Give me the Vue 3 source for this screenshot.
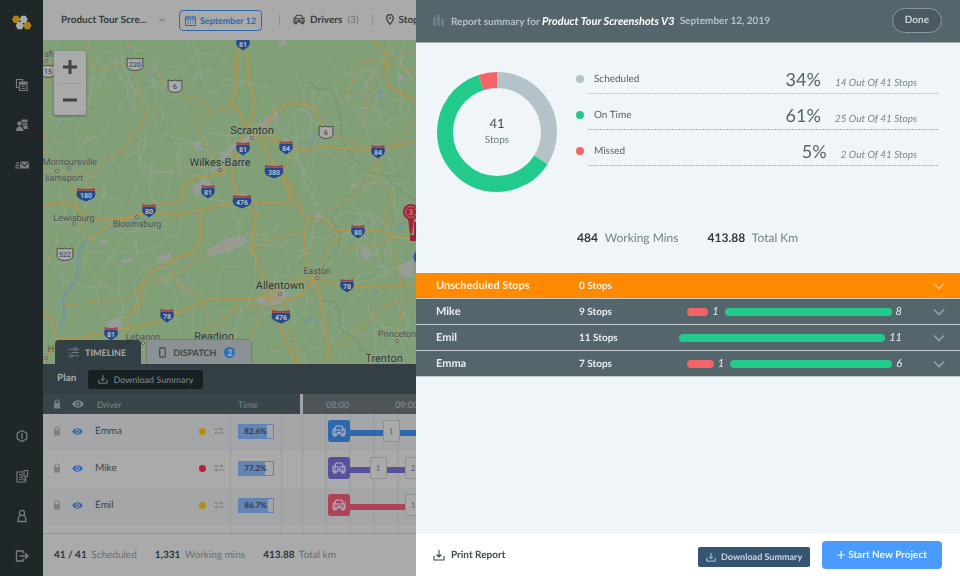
<script setup>
const navTop = ['copy', 'drivers', 'mail']
const navBottom = ['alert', 'depot', 'user', 'exit']

const roads = [
  'M86 40L85 55L95 66L105 69L128 64', 'M127 40L130 55L133 62',
  'M137 70L135 78L139 90L138 98L145 114L142 125L131 134L128 145L118 155L103 160L97 168L90 176L87 182L90 192',
  'M147 67L158 73L164 85L175 88L185 98L198 98L208 107L210 114L228 107L236 106',
  'M210 114L199 128L204 140L212 158L218 168', 'M43 133L48 142L47 150L43 155',
  'M43 170L60 172L80 172L90 176', 'M43 60L53 62L58 70', 'M43 92L48 84L48 78', 'M70 175L71 182L74 195L78 210L80 224L88 240',
  'M43 258L57 255L78 252', 'M330 210L355 195L366 180L378 158', 'M333 136L345 138L358 145L372 150',
  'M236 106L232 100L236 85L234 60L240 50', 'M258 138L270 130L290 150L285 175L300 200',
  'M388 62L370 60L358 65L354 75L350 90L342 100', 'M386 62L375 78L367 95L366 112L362 125',
  'M386 62L400 55L416 50', 'M388 63L405 70L420 72', 'M420 112L405 135L395 146',
  'M378 158L378 182L392 195L384 215L390 236L392 250L400 275L402 300L398 340',
  'M63 305L90 303L130 297L139 289L158 280L180 272L195 262L215 250L240 242',
  'M172 262L177 285L195 292L207 310L208 325L200 340', 'M240 305L225 318L210 338L200 350',
  'M250 249L270 240L304 231', 'M336 232L328 250L316 277', 'M338 235L340 247L352 250L362 242L375 246L390 238',
  'M268 297L285 300L300 296L316 280', 'M220 320L240 308L265 305', 'M263 305L258 320L250 345L250 364',
  'M329 350L350 338L365 325L380 308L400 302L420 297', 'M285 300L283 318L295 340L299 364', 'M128 328L140 345L180 348',
]
const highways = [
  'M243 45L247 52L249 85L254 95L253 115L247 128L236 150L220 172L210 176L195 178L181 188L183 198L175 202L157 205',
  'M243 45L237 52L236 85L232 105L240 113L246 126L260 138L270 158L280 172L290 185L293 203',
  'M220 175L235 160L250 140L260 130L270 122L273 112L285 104L302 103L314 107L322 125L326 132',
  'M263 138L272 139L285 146L303 151L325 146L350 149L378 150L395 146L420 140',
  'M373 40L386 52L388 85L394 90L420 103',
  'M43 206L60 202L75 206L90 218L110 219L135 217L150 212L175 215L200 210L215 206L240 202L300 204L302 215L310 218L328 220L336 230L362 231L380 230L390 236L420 236',
  'M232 160L232 175L235 190L245 202L256 215L252 245L262 275L266 296L285 300L300 296L316 277',
  'M200 210L201 240L193 252L170 260L152 272L140 288L143 300L137 307L127 318L128 328',
  'M60 338L80 338L105 333L128 328L150 324L165 318L180 312L200 303L215 298L255 298L270 295L295 280L316 277L330 283L350 287L372 286L420 285',
  'M43 312L52 320L54 332L60 340L50 352L43 362', 'M308 220L304 240L309 270L316 277',
  'M266 296L276 312L285 340L297 364', 'M316 278L322 310L327 340L329 350L325 364', 'M283 180L293 203',
  'M88 240L105 228L130 217L150 212',
]

// Small local roads: deterministic wandering lines below the main network.
let seed = 7
const rnd = () => {
  seed = (seed * 16807) % 2147483647
  return seed / 2147483647
}
const lanes = Array.from({ length: 130 }, () => {
  let x = 43 + rnd() * 375
  let y = 40 + rnd() * 324
  let a = rnd() * 6.28
  let d = `M${Math.round(x)} ${Math.round(y)}`
  for (let i = 0; i < 9; i++) {
    a += (rnd() - 0.5) * 1.3
    x += Math.cos(a) * 7
    y += Math.sin(a) * 7
    d += `L${Math.round(x)} ${Math.round(y)}`
  }
  return d
})

const towns = [
  'M250 132L262 122L277 108L278 116L262 134L250 142L232 150L222 166L200 176L212 182L196 198L192 188L206 176L228 148Z',
  'M207 250L228 238L244 236L244 244L222 253L208 256Z', 'M220 245L244 236L250 241L226 253Z', 'M106 325L116 317L123 324L118 331L106 332Z',
  'M396 268L413 258L414 276L402 277Z', 'M194 144L200 143L202 150L196 152Z', 'M279 40L286 40L286 46L279 46Z',
  'M398 73L406 77L399 83Z', 'M360 249L368 246L372 256L364 260Z', 'M316 212L324 216L318 222L314 218Z',
  'M255 300L275 290L290 292L282 304L262 306Z', 'M160 256L172 252L168 262L156 260Z', 'M120 260L134 257L132 262L122 263Z', 'M100 241L109 239L106 244L102 244Z',
]
const water = [
  'M130 48L131 60', 'M148 68L155 77', 'M310 145L314 138L318 134', 'M380 90L380 100', 'M88 238L79 250L78 275L62 300L65 315L60 328',
  'M105 229L120 227L135 220', 'M157 206L175 202', 'M315 324L322 318', 'M398 232L403 222', 'M372 289L378 293', 'M60 125L64 120', 'M397 51L400 55', 'M304 322L312 318',
]
const interstates = [
  [243, 43, '81'], [86, 194, '180'], [208, 191, '81'], [243, 148, '81'], [286, 147, '84'], [378, 151, '84'],
  [274, 171, '380'], [242, 201, '476'], [149, 210, '80'], [358, 231, '80'], [347, 285, '78'], [167, 315, '78'],
  [111, 333, '81'], [281, 316, '476'],
].map(([x, y, n]) => ({ x, y, n, w: n.length > 2 ? 9 : 6.5 }))
const routes = [[135, 64, '220'], [175, 86, '6'], [326, 132, '6'], [65, 254, '522'], [48, 71, '15']]
  .map(([x, y, n]) => ({ x, y, n, w: n.length > 2 ? 8 : 7 }))
const places = [
  { x: 252, y: 134, n: 'Scranton', s: 'city', dx: 252, dy: 138 },
  { x: 220, y: 166, n: 'Wilkes-Barre', s: 'city', dx: 220, dy: 170 },
  { x: 280, y: 289, n: 'Allentown', s: 'city', dx: 280, dy: 294 },
  { x: 214, y: 340, n: 'Reading', s: 'city', dx: 214, dy: 344 },
  { x: 384, y: 362, n: 'Trenton', s: 'city', dx: 384, dy: 368 },
  { x: 70, y: 165, n: 'Montoursville', s: 'town', dx: 69, dy: 168 },
  { x: 64, y: 181, n: 'liamsport', s: 'town', dx: 57, dy: 171 },
  { x: 74, y: 221, n: 'Lewisburg', s: 'town', dx: 74, dy: 224 },
  { x: 137, y: 227, n: 'Bloomsburg', s: 'town', dx: 137, dy: 217 },
  { x: 317, y: 274, n: 'Easton', s: 'town', dx: 317, dy: 278 },
  { x: 143, y: 340, n: 'Lebanon', s: 'town', dx: 143, dy: 343 },
  { x: 397, y: 337, n: 'Princeton', s: 'town', dx: 397, dy: 341 },
  { x: 49, y: 57, n: 'sfi', s: 'town', dx: 46, dy: 61 },
  { x: 51, y: 352, n: 'H', s: 'town', dx: 46, dy: 358 },
]

const drivers = [
  { name: 'Emma', dot: 'amber', time: 82.6, tone: 'blue', legs: [{ w: 33, n: 1 }, { w: 60, n: 2 }] },
  { name: 'Mike', dot: 'red', time: 77.2, tone: 'violet', legs: [{ w: 20, n: 1 }, { w: 18, n: 2 }] },
  { name: 'Emil', dot: 'amber', time: 86.7, tone: 'rose', legs: [{ w: 55, n: 1 }, { w: 60, n: 2 }] },
]

const shares = [
  { label: 'Scheduled', pct: 34, stops: 14, tone: 'grey', from: 0 },
  { label: 'On Time', pct: 61, stops: 25, tone: 'green', from: 34 },
  { label: 'Missed', pct: 5, stops: 2, tone: 'red', from: 95 },
]

const rows = [
  { name: 'Unscheduled Stops', stops: 0, missed: 0, done: 0, open: true },
  { name: 'Mike', stops: 9, missed: 1, mw: 21, done: 8, dw: 167 },
  { name: 'Emil', stops: 11, missed: 0, done: 11, dw: 206 },
  { name: 'Emma', stops: 7, missed: 1, mw: 27, done: 6, dw: 162 },
]
</script>

<template>
  <div class="app">
    <svg class="defs" aria-hidden="true">
      <symbol id="download" viewBox="0 0 12 12"><path d="M1 7v4h10V7M6 1v7M3.5 5.5L6 8l2.5-2.5" fill="none" stroke="currentColor" stroke-width="1.1" /></symbol>
      <symbol id="chevron" viewBox="0 0 12 8"><path d="M1 1.5l5 5 5-5" fill="none" stroke="currentColor" stroke-width="1.700" /></symbol>
      <symbol id="car" viewBox="0 0 14 12"><path d="M2.6 5L3.8 1.8Q4.1 1 5 1h4q.9 0 1.2.8L11.400 5M2.500 5h9Q13 5 13 6.500V9H1V6.500Q1 5 2.500 5ZM2 9v2h2V9M10 9v2h2V9M0.300 4h1.500M12.200 4h1.500M5 7.300h4" fill="none" stroke="currentColor" stroke-width="1.200" /><circle cx="3.200" cy="7" r=".8" fill="currentColor" /><circle cx="10.800" cy="7" r=".8" fill="currentColor" /></symbol>
      <symbol id="lock" viewBox="0 0 8 10"><path d="M2 4.500V3a2 2 0 0 1 4 0v1.500" fill="none" stroke="currentColor" stroke-width="1.200" /><rect x="1" y="4" width="6" height="5.500" rx=".6" fill="currentColor" /></symbol>
      <symbol id="eye" viewBox="0 0 12 8"><path fill-rule="evenodd" d="M0 4Q2.500.2 6 .2T12 4Q9.500 7.800 6 7.800T0 4ZM6 1.500a2.500 2.500 0 1 0 0 5 2.500 2.500 0 0 0 0-5Z" fill="currentColor" /><circle cx="6" cy="4" r="1.400" fill="currentColor" /></symbol>
      <symbol id="swap" viewBox="0 0 10 8"><path d="M0 2h9M7 .3L9 2 7 3.700M10 6H1M3 4.300L1 6l2 1.700" fill="none" stroke="currentColor" stroke-width=".9" /></symbol>
      <symbol id="copy" viewBox="0 0 14 14"><path d="M4 9.500H1.500v-8h6V3M4.500 4H12v8.500H4.500ZM6.500 6.500H10M6.500 8.500H10M6.500 10.500H10" fill="none" stroke="currentColor" stroke-width="1.200" /><path d="M5 4h6.500v2.500H5z" fill="currentColor" /></symbol>
      <symbol id="drivers" viewBox="0 0 14 14"><circle cx="4.500" cy="5.500" r="2.200" fill="currentColor" /><path d="M1 13q0-4.500 3.500-4.500T8.500 13ZM6.500 1.500h6V4h-6zM7.500 4.800h5v1.700h-5zM8 7.300h4.500V11H9q0-2-1.500-3Z" fill="currentColor" /></symbol>
      <symbol id="mail" viewBox="0 0 14 10"><path d="M5 1.500h9L9.500 5.500ZM5 2.800l4.500 3.900L14 2.800V8.500H5ZM1 2.500h3v1.200H1zM.5 5h3.500v1.200H.5zM0 7.300h4v1.200H0z" fill="currentColor" /></symbol>
      <symbol id="alert" viewBox="0 0 14 14"><path d="M7 1.500l4.700 2.700v5.600L7 12.500 2.300 9.800V4.200ZM7 4v6" fill="none" stroke="currentColor" stroke-width="1.300" /></symbol>
      <symbol id="depot" viewBox="0 0 14 14"><path d="M8 3H2v10h8.500V8M4 5.500h2M4 8h2M4 10.500h2M7 5v5.500M9 1.500h3.500V7L10.700 8 9 7ZM9 9.500v2" fill="none" stroke="currentColor" stroke-width="1.200" /></symbol>
      <symbol id="user" viewBox="0 0 14 14"><circle cx="7" cy="4" r="2.600" fill="none" stroke="currentColor" stroke-width="1.300" /><path d="M5.500 6.200Q3 7.500 3 12.500h8Q11 7.500 8.500 6.200" fill="none" stroke="currentColor" stroke-width="1.300" /></symbol>
      <symbol id="exit" viewBox="0 0 14 14"><path d="M8 4.500V2H1.500v10H8V9.500M4.500 7H13M10 4l3 3-3 3" fill="none" stroke="currentColor" stroke-width="1.400" /></symbol>
    </svg>

    <nav class="rail">
      <svg class="logo" viewBox="0 0 20 16" aria-hidden="true">
        <path class="gold" d="M2 .8h4.200l2.100 3.600L6.200 8H2L0 4.400ZM13.200 7h4.200l2.100 3.600-2.100 3.600h-4.200l-2-3.600Z" />
        <path class="pale" d="M9.500.8h4.200l2.100 3.600L13.700 8H9.500L7.500 4.400ZM5.700 7h4.200l2.100 3.600-2.100 3.600H5.700l-2-3.600Z" />
      </svg>
      <div class="rail-group">
        <button v-for="i in navTop" :key="i" type="button" :aria-label="i"><svg><use :href="'#' + i" /></svg></button>
      </div>
      <div class="rail-group low">
        <button v-for="i in navBottom" :key="i" type="button" :aria-label="i"><svg><use :href="'#' + i" /></svg></button>
      </div>
    </nav>

    <main class="work">
      <header class="topbar">
        <button type="button" class="project">Product Tour Scre... <svg><use href="#chevron" /></svg></button>
        <button type="button" class="date">
          <svg viewBox="0 0 11 11"><path d="M.5 2h10v8.500H.5ZM.5 4h10M3 .5V3M8 .5V3" fill="none" stroke="currentColor" /><path d="M2.500 6h6M2.500 8h6" stroke="currentColor" stroke-dasharray="1.200 1.200" /></svg>
          September 12
        </button>
        <span class="rule"></span>
        <button type="button" class="count"><svg class="car"><use href="#car" /></svg>Drivers <span>(3)</span></button>
        <span class="rule"></span>
        <button type="button" class="count"><svg class="pin" viewBox="0 0 8 11"><path d="M4 10.300Q.7 6.500.7 4a3.300 3.300 0 0 1 6.600 0Q7.300 6.500 4 10.300Z" fill="none" stroke="currentColor" stroke-width="1.200" /><circle cx="4" cy="4" r="1" fill="currentColor" /></svg>Stops</button>
      </header>

      <section class="map">
        <svg class="terrain" viewBox="43 40 917 324" preserveAspectRatio="xMinYMin slice">
          <path v-for="d in towns" :key="d" :d="d" class="urban" />
          <path v-for="d in lanes" :key="d" :d="d" class="lane" />
          <path d="M309 82L316 88L330 90L337 103L341 120L342 140L352 158L362 165L368 172L385 175L392 183L400 190L416 200M378 158L366 180L352 195L330 215L340 235L338 250L325 262L317 280L320 300L335 302L340 312L340 328L354 338L362 350L372 355" class="border" />
          <path v-for="d in water" :key="d" :d="d" class="water" />
          <path v-for="d in roads" :key="d" :d="d" class="road" />
          <path v-for="d in highways" :key="d" :d="d" class="highway" />
          <g v-for="(s, i) in interstates" :key="'i' + i" :transform="`translate(${s.x} ${s.y})`">
            <path :d="`M${-s.w} -3Q${-s.w - 1.500} 3 ${-s.w + 3} 5L0 7.500L${s.w - 3} 5Q${s.w + 1.500} 3 ${s.w} -3Z`" class="shield-blue" />
            <path :d="`M${-s.w} -6Q0 -4 ${s.w} -6V-3.200H${-s.w}Z`" class="shield-red" />
            <text y="3.500" class="shield-text">{{ s.n }}</text>
          </g>
          <g v-for="(s, i) in routes" :key="'r' + i" :transform="`translate(${s.x} ${s.y})`">
            <path :d="`M${-s.w} -6L-3 -5L0 -6L3 -5L${s.w} -6Q${s.w - .5} -1 ${s.w} 2Q${s.w} 6 0 6.500Q${-s.w} 6 ${-s.w} 2Q${-s.w + .5} -1 ${-s.w} -6Z`" class="us-shield" />
            <text y="3" class="us-text">{{ s.n }}</text>
          </g>
          <g v-for="p in places" :key="p.n">
            <circle :cx="p.dx" :cy="p.dy" r="1.600" class="spot" />
            <text :x="p.x" :y="p.y" :class="p.s">{{ p.n }}</text>
          </g>
          <path d="M408 218L414 218L412 234L410 234ZM414 222L420 222V241H410V235H414Z" class="marker" />
          <circle cx="411" cy="212" r="8" class="marker" />
          <circle cx="411" cy="212" r="5.500" class="marker-ring" />
          <text x="411" y="215" class="marker-text">3</text>
          <circle cx="421" cy="257" r="7.500" class="marker-blue" />
        </svg>
        <div class="zoom">
          <button type="button" aria-label="Zoom in"><svg viewBox="0 0 16 16"><path d="M8 1v14M1 8h14" /></svg></button>
          <button type="button" aria-label="Zoom out"><svg viewBox="0 0 16 16"><path d="M1 8h14" /></svg></button>
        </div>
        <div class="tabs">
          <button type="button" class="tab on"><svg viewBox="0 0 10 10"><path d="M0 2h5M8 2h2M0 8h1M5 8h5M3 5h7M0 5h1" /><circle cx="6.500" cy="2" r="1.200" /><circle cx="3" cy="8" r="1.200" /></svg>TIMELINE</button>
          <button type="button" class="tab"><svg viewBox="0 0 10 10"><rect x="2.500" y=".8" width="5" height="8.400" rx="1" /></svg>DISPATCH <b>2</b></button>
        </div>
      </section>

      <section class="plan">
        <div class="plan-bar">
          <h2>Plan</h2>
          <button type="button"><svg><use href="#download" /></svg>Download Summary</button>
        </div>
        <table>
          <colgroup><col class="c-lock" /><col class="c-eye" /><col class="c-name" /><col class="c-dot" /><col class="c-swap" /><col class="c-time" /><col class="c-gap" /><col /></colgroup>
          <thead>
            <tr>
              <th><svg class="lock"><use href="#lock" /></svg></th>
              <th><svg class="eye"><use href="#eye" /></svg></th>
              <th class="driver">Driver</th><th></th><th></th><th class="time">Time</th><th class="split"></th>
              <th class="hours"><div><span>08:00</span><span>09:00</span><span>10:00</span></div></th>
            </tr>
          </thead>
          <tbody>
            <tr v-for="d in drivers" :key="d.name">
              <td><svg class="lock"><use href="#lock" /></svg></td>
              <td><svg class="eye"><use href="#eye" /></svg></td>
              <td>{{ d.name }}</td>
              <td><i class="dot" :class="d.dot"></i></td>
              <td><svg class="swap"><use href="#swap" /></svg></td>
              <td class="lined"><div class="meter"><i :style="{ width: d.time + '%' }"></i><span>{{ d.time }}%</span></div></td>
              <td class="lined"></td>
              <td class="track">
                <div class="route" :class="d.tone">
                  <span class="van"><svg><use href="#car" /></svg></span>
                  <template v-for="l in d.legs" :key="l.n"><i :style="{ width: l.w + 'px' }"></i><b>{{ l.n }}</b></template>
                </div>
              </td>
            </tr>
            <tr class="tail"><td colspan="5"></td><td class="lined"></td><td class="lined"></td><td class="track"></td></tr>
          </tbody>
        </table>
      </section>

      <footer class="totals">
        <span><b>41 / 41</b> Scheduled</span><span><b>1,331</b> Working mins</span><span><b>413.88</b> Total km</span>
      </footer>
    </main>

    <aside class="report">
      <header class="report-head">
        <svg viewBox="0 0 11 11"><path d="M1.500 11V2M5.500 11V0M9.500 11V4" stroke="currentColor" stroke-width="2.600" /></svg>
        <h1>Report summary for <em>Product Tour Screenshots V3</em></h1>
        <time>September 12, 2019</time>
        <button type="button">Done</button>
      </header>

      <section class="overview">
        <div class="donut">
          <svg viewBox="0 0 120 120">
            <circle v-for="s in shares" :key="s.label" cx="60" cy="60" r="52" pathLength="100" :class="s.tone" :stroke-dasharray="`${s.pct} 100`" :stroke-dashoffset="-s.from" />
          </svg>
          <p><b>41</b>Stops</p>
        </div>
        <ul class="shares">
          <li v-for="s in shares" :key="s.label" :class="s.tone">
            <i></i>
            <div><span>{{ s.label }}</span><p><strong>{{ s.pct }}%</strong><em>{{ s.stops }} Out Of 41 Stops</em></p></div>
          </li>
        </ul>
      </section>

      <p class="sums"><span><b>484</b> Working Mins</span><span><b>413.88</b> Total Km</span></p>

      <ul class="rows">
        <li v-for="r in rows" :key="r.name" :class="{ orange: r.open }">
          <span class="who">{{ r.name }}</span>
          <span class="stops">{{ r.stops }} Stops</span>
          <span class="bars">
            <template v-if="r.missed"><i class="red" :style="{ width: r.mw + 'px' }"></i><em>{{ r.missed }}</em></template>
            <template v-if="r.done"><i class="green" :style="{ width: r.dw + 'px' }"></i><em>{{ r.done }}</em></template>
          </span>
          <button type="button" :aria-label="'Expand ' + r.name"><svg><use href="#chevron" /></svg></button>
        </li>
      </ul>

      <footer class="actions">
        <button type="button" class="print"><svg><use href="#download" /></svg>Print Report</button>
        <button type="button" class="summary"><svg><use href="#download" /></svg>Download Summary</button>
        <button type="button" class="start"><svg viewBox="0 0 8 8"><path d="M4 0v8M0 4h8" stroke="currentColor" stroke-width="1.200" /></svg>Start New Project</button>
      </footer>
    </aside>
  </div>
</template>

<style>
body { margin: 0; }
</style>

<style scoped>
* { box-sizing: border-box; }
.app { display: flex; min-height: 100vh; font-family: Lato, "Liberation Sans", sans-serif; font-size: 10px; color: #3b4548; overflow: hidden; text-rendering: geometricPrecision; }
.defs { position: absolute; width: 0; height: 0; }
button { display: flex; align-items: center; border: 0; padding: 0; background: none; font: inherit; color: inherit; white-space: nowrap; text-rendering: inherit; }
svg { display: block; flex: none; }
h1, h2, p, ul { margin: 0; padding: 0; list-style: none; font: inherit; }

.rail { width: 43px; flex: none; display: flex; flex-direction: column; align-items: center; background: #1f2729; color: #777d7f; padding: 15px 0 13px; }
.logo { width: 20px; height: 16px; }
.gold { fill: #ac8312; }
.pale { fill: #a8abac; }
.rail-group { display: flex; flex-direction: column; gap: 26px; margin-top: 47px; }
.rail-group.low { margin-top: auto; }
.rail-group svg { width: 14px; height: 14px; }

.work { flex: 1; min-width: 0; display: flex; flex-direction: column; background: #aaa; }
.topbar { display: flex; align-items: center; height: 40px; padding: 0 0 1px 18px; overflow: hidden; font-weight: 700; color: #353b3d; }
.project { gap: 12px; }
.project svg { width: 6px; height: 4px; color: #555; }
.date { gap: 4px; height: 21px; margin: 1px 0 0 14px; padding: 0 5px; border: 1px solid #2f67ad; border-radius: 4px; color: #2f67ad; font-size: 9px; }
.date svg { width: 11px; height: 11px; }
.rule { width: 1px; height: 12px; flex: none; background: #929292; margin: 0 13px; }
.date + .rule { margin-left: 17px; }
.count { gap: 5px; }
.count span { font-weight: 400; color: #6c7173; }
.car { width: 12px; height: 11px; }
.pin { width: 8px; height: 11px; }

.map { position: relative; flex: 1; min-height: 200px; overflow: hidden; background: #81a078; }
.terrain { position: absolute; width: 100%; height: 100%; }
.terrain path { stroke-linejoin: round; }
.urban { fill: #979c98; }
.lane { fill: none; stroke: #93a58e; stroke-width: 1; }
.water { fill: none; stroke: #6d93b0; stroke-width: 1.5; }
.border { fill: none; stroke: #6c7c6b; stroke-width: 1; stroke-dasharray: 2 2; }
.road { fill: none; stroke: #ab955a; stroke-width: 1.2; }
.highway { fill: none; stroke: #ae9550; stroke-width: 2; }
.shield-blue { fill: #25498a; }
.shield-red { fill: #9f4144; }
.us-shield { fill: #a9a9a9; stroke: #4a4f4a; stroke-width: 1; }
.terrain text { font-family: Roboto, "Liberation Sans", sans-serif; text-anchor: middle; }
.shield-text { font-size: 7px; font-weight: 700; fill: #b9c0cc; }
.us-text { font-size: 7px; fill: #333; }
.spot { fill: #aaa; stroke: #555; stroke-width: .8; }
.city { font-size: 11px; fill: #303530; stroke: #8fa489; stroke-width: 1.5; paint-order: stroke; }
.town { font-size: 9px; fill: #4a524a; stroke: #8fa489; stroke-width: 1; paint-order: stroke; }
.marker { fill: #a02439; }
.marker-ring { fill: none; stroke: #b88; stroke-width: .8; }
.marker-text { font-size: 8px; fill: #caa; }
.marker-blue { fill: #1c57ae; }
.zoom { position: absolute; left: 11px; top: 11px; display: grid; padding: 0 4px; background: #aaa; border-radius: 2px; box-shadow: 0 1px 3px #5b6b58; }
.zoom button { width: 24px; height: 32px; justify-content: center; }
.zoom button + button { border-top: 1px solid #999; }
.zoom svg { width: 16px; height: 16px; }
.zoom path { stroke: #3f4344; stroke-width: 3; }
.tabs { position: absolute; left: 12px; bottom: 0; display: flex; gap: 6px; font-size: 9px; font-weight: 700; }
.tab { height: 24px; gap: 6px; padding: 0 15px 0 13px; border-radius: 4px 4px 0 0; background: #8c9293; box-shadow: 0 0 0 1px #767d7c; color: #3a474b; }
.tab.on { background: #323f44; box-shadow: none; color: #a6a9aa; }
.tab:last-child { gap: 5px; padding: 0 16px 0 10px; }
.tab svg { width: 11px; height: 11px; fill: none; stroke: currentColor; }
.tab.on svg { stroke: #6f797c; }
.tab b { width: 11px; height: 11px; margin-left: 3px; border-radius: 6px; background: #2f6dbb; color: #aaa; font-size: 9px; line-height: 11px; }

.plan-bar { display: flex; align-items: center; height: 30px; padding-left: 14px; gap: 12px; background: #333f44; color: #a5abad; font-weight: 700; }
.plan-bar h2 { padding-bottom: 2px; }
.plan-bar button { gap: 5px; height: 19px; padding: 0 10px; background: #182022; border-radius: 2px; color: #848b8d; font-size: 9px; font-weight: 400; }
.plan-bar svg, .actions svg { width: 10px; height: 10px; }
table { width: 100%; table-layout: fixed; border-collapse: collapse; }
th, td { padding: 0; text-align: left; font-weight: 400; }
.c-lock { width: 29px; } .c-eye { width: 23px; } .c-name { width: 102px; } .c-dot { width: 16px; } .c-swap { width: 17px; } .c-time { width: 51px; } .c-gap { width: 21px; }
th { height: 20px; background: #38464b; color: #7a8587; font-size: 9px; }
th.driver { padding-left: 2px; }
th.time { padding-left: 8px; }
th.split { background: linear-gradient(90deg, #38464b 19px, #a4a6a6 19px); }
th.hours { background: #4d5559; color: #888f91; border-left: 2px solid #a4a6a6; }
.hours div { display: flex; gap: 46px; padding-left: 23px; }
td { height: 37px; padding-bottom: 3px; font-size: 10px; }
tbody tr:nth-child(odd) { background: #a4a6a8; }
tbody tr.tail { background: #aaa; }
tbody tr.tail td { height: 8px; }
.lined { border-left: 1px solid #969b9b; }
.lock { width: 8px; height: 10px; margin-left: 10px; color: #7b8283; }
.eye { width: 12px; height: 8px; }
tbody .eye { width: 11px; height: 7px; color: #2c67b3; }
.swap { width: 10px; height: 8px; margin-left: 1px; color: #777d7e; }
.dot { display: block; width: 7px; height: 7px; margin-left: 2px; border-radius: 50%; }
.amber { background: #b58d0d; }
.dot.red { background: #b02237; }
.meter { position: relative; width: 36px; height: 15px; margin-left: 7px; border: 1px solid #5d84b8; }
.meter i { display: block; height: 100%; background: #6484b1; }
.meter span { position: absolute; inset: 0; font-size: 8px; font-weight: 700; line-height: 13px; text-align: center; color: #2d3a4c; }
.track { border-left: 1px solid #969b9b; background: repeating-linear-gradient(90deg, transparent 0 23px, #969b9b 23px 24px); overflow: hidden; }
.route { display: flex; align-items: center; padding-left: 25px; }
.van { display: grid; place-items: center; width: 22px; height: 22px; flex: none; border-radius: 3px; background: var(--tone); color: #b3b8c4; }
.van svg { width: 14px; height: 12px; }
.route i { height: 6px; margin-top: 4px; flex: none; background: var(--tone); }
.route b { width: 17px; height: 22px; flex: none; background: #aaa; border: 1px solid #8c9192; border-radius: 2px; color: #5a6278; font-size: 8px; font-weight: 400; line-height: 20px; text-align: center; }
.blue { --tone: #2f67ad; } .violet { --tone: #57509c; } .rose { --tone: #b04256; }
.totals { display: flex; align-items: center; gap: 18px; height: 43px; padding-left: 11px; border-top: 1px solid #8f9394; color: #666f72; white-space: nowrap; }
.totals b { margin-right: 2px; color: #2e3537; }

.report { position: fixed; top: 0; right: 0; bottom: 0; width: 56.67%; display: flex; flex-direction: column; background: #eff5f8; }
.report-head { display: flex; align-items: center; height: 43px; padding: 0 18px 2px 17px; background: #54666c; border-bottom: 1px solid #a2adb1; color: #b6c1c4; font-weight: 700; }
.report-head svg { width: 11px; height: 11px; margin-right: 7px; color: #71828d; }
.report-head em { color: #fff; font-size: 11px; }
.report-head time { margin-left: 5px; }
.report-head h1, .report-head time { padding-top: 2px; }
.report-head button { height: 25px; margin-left: auto; padding: 0 12px; border: 1px solid #8a979b; border-radius: 13px; background: #4b5a60; color: #ccd4d6; }
.overview { display: flex; padding: 15px 22px 0 21px; gap: 19px; }
.donut { position: relative; width: 120px; height: 120px; flex: none; margin-top: 14px; }
.donut svg { width: 120px; height: 120px; transform: rotate(-90deg); }
.donut circle { fill: none; stroke-width: 16; stroke: var(--c); }
.grey { --c: #b4c3c9; --line: #bcc8cd; }
.green { --c: #22ca8b; --line: #5fd8a8; }
.red { --c: #f26466; --line: #f59a9c; }
.donut p { position: absolute; inset: 42px 0 0; text-align: center; line-height: 16px; color: #6d7a7e; }
.donut b { display: block; line-height: 18px; font-size: 13px; font-weight: 400; color: #3f4c50; }
.shares { flex: 1; }
.shares li { display: flex; gap: 4px; height: 36px; }
.shares i { width: 8px; height: 8px; margin-top: 17px; border-radius: 50%; background: var(--c); }
.shares div { flex: 1; display: flex; align-items: center; justify-content: space-between; padding: 7px 21px 1px 6px; background: repeating-linear-gradient(90deg, var(--line) 0 2px, transparent 2px 3px) left bottom / 100% 1px no-repeat; color: #56656a; }
.shares p { display: flex; align-items: baseline; gap: 14px; }
.shares strong { font-size: 18px; line-height: 22px; font-weight: 400; }
.shares em { color: #77858a; }
.sums { display: flex; gap: 29px; margin-top: 38px; padding: 0 161px; line-height: 16px; font-size: 12px; color: #748287; white-space: nowrap; }
.sums b { margin-right: 4px; color: #333b3d; }
.rows { margin-top: 27px; color: #e8eef0; font-weight: 700; }
.rows li { display: grid; grid-template-columns: 143px 1fr 246px 58px; align-items: center; height: 26px; padding-left: 20px; background: #54666c; border-bottom: 1px solid #c3cccf; }
.rows li.orange { background: #ff8a00; color: #fff0df; }
.who { font-size: 11px; }
.stops { padding-top: 1px; }
.bars { display: flex; align-items: center; justify-content: flex-end; }
.bars i { height: 8px; border-radius: 4px; background: var(--c); }
.bars em { margin: 0 6px 0 4px; font-size: 11px; font-weight: 400; }
.bars em:last-child { margin-right: 0; }
.rows button { justify-content: center; padding: 6px 0 6px 16px; }
.rows svg { width: 12px; height: 8px; color: #93a2a8; }
.rows .orange svg { color: #ffbc73; }
.actions { display: flex; align-items: center; gap: 12px; margin-top: auto; height: 42px; padding: 0 18px 0 17px; background: #fff; font-weight: 700; }
.actions .print { gap: 6px; margin-right: auto; color: #3d4a4e; }
.actions .print svg { width: 12px; height: 12px; }
.summary { gap: 5px; height: 20px; margin-top: 3px; padding: 0 8px; border-radius: 2px; background: #365573; color: #c6d3e0; font-size: 9px; }
.start { gap: 3px; height: 28px; padding: 0 15px; border-radius: 4px; background: #499bff; color: #eef6ff; }
.actions .start svg { width: 8px; height: 8px; }
</style>
